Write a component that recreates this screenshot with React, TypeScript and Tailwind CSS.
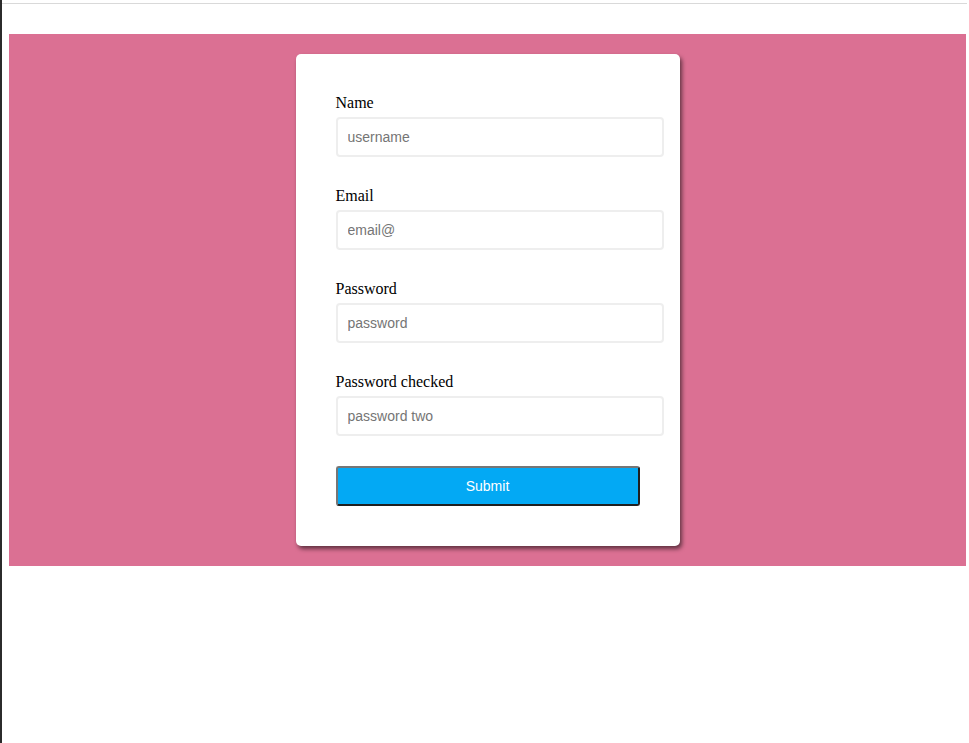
import React from "react";

const fields = [
    { label: "Name", placeholder: "username", type: "text" },
    { label: "Email", placeholder: "email@", type: "email" },
    { label: "Password", placeholder: "password", type: "password" },
    { label: "Password checked", placeholder: "password two", type: "password" },
];

const App = () => {
    return (
        <div className="h-[743px] border-l-2 border-[#2b2b2b] bg-white overflow-hidden">
            <div className="pt-[3px]">
                <div className="h-px bg-[#d9d9d9] mr-[2px]" />
            </div>
            <section className="mt-[30px] ml-[7px] mr-[3px] bg-[#db7093] py-[20px] flex justify-center">
                <form
                    className="w-[384px] bg-white rounded-[5px] pt-[40px] pl-[40px] pr-[16px] pb-[40px] shadow-[2px_3px_4px_rgba(0,0,0,0.55)]"
                    onSubmit={(e) => e.preventDefault()}
                >
                    {fields.map((field, index) => (
                        <div key={index} className="mb-[30px]">
                            <label className="block h-[18px] leading-[18px] text-[16px] text-black font-['Liberation_Serif',serif] mb-[5px]">
                                {field.label}
                            </label>
                            <input
                                type={field.type}
                                placeholder={field.placeholder}
                                className="block w-[328px] h-[40px] border-2 border-[#eeeeee] rounded-[4px] pl-[10px] text-[14px] font-['Liberation_Sans',sans-serif] placeholder:text-[#757575] outline-none"
                            />
                        </div>
                    ))}
                    <button
                        type="submit"
                        className="block w-[304px] h-[40px] bg-[#03a9f4] text-white text-[14px] font-['Liberation_Sans',sans-serif] rounded-[3px] border-2 border-t-[#767676] border-l-[#767676] border-r-[#1f1f1f] border-b-[#1f1f1f]"
                    >
                        Submit
                    </button>
                </form>
            </section>
        </div>
    );
};

export default App;
